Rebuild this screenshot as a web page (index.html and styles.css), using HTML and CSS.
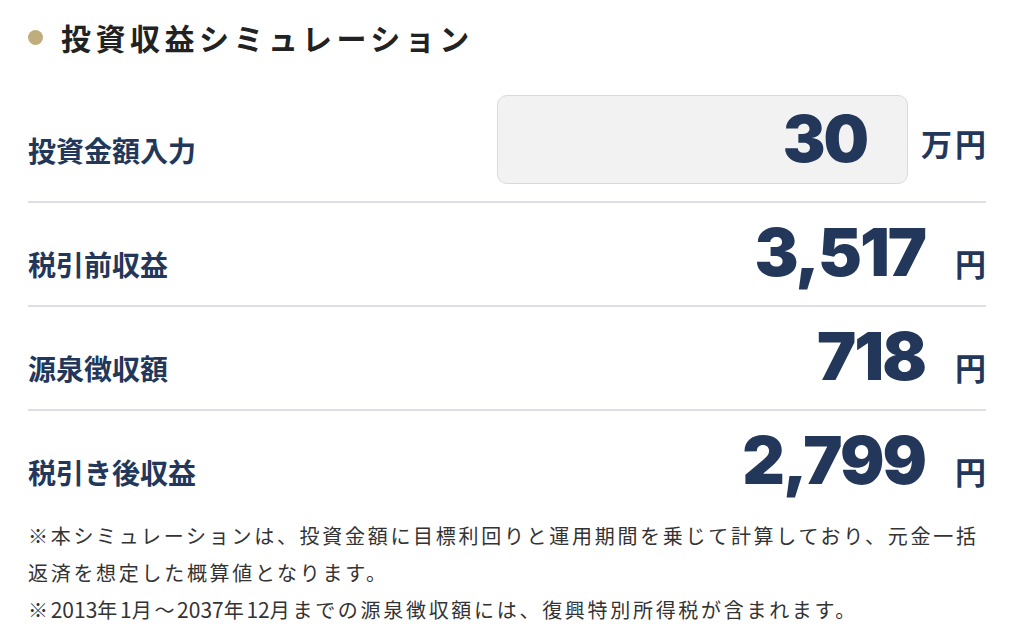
FILE: index.html
```html
<!DOCTYPE html>
<html lang="ja">
<head>
<meta charset="utf-8">
<title>投資収益シミュレーション</title>
<link rel="stylesheet" href="styles.css">
</head>
<body>
<section class="sim">
  <h2 class="sim-title"><span class="dot"></span>投資収益シミュレーション</h2>
  <div class="row row-input">
    <div class="label label-input">投資金額入力</div>
    <div class="input-wrap">
      <div class="input-box">30</div>
      <div class="unit unit-man">万円</div>
    </div>
  </div>
  <div class="row">
    <div class="label">税引前収益</div>
    <div class="value"><span class="num">3,517</span><span class="unit">円</span></div>
  </div>
  <div class="row">
    <div class="label">源泉徴収額</div>
    <div class="value"><span class="num">718</span><span class="unit">円</span></div>
  </div>
  <div class="row row-last">
    <div class="label">税引き後収益</div>
    <div class="value"><span class="num">2,799</span><span class="unit">円</span></div>
  </div>
  <div class="notes">
    <p>※本シミュレーションは、投資金額に目標利回りと運用期間を乗じて計算しており、元金一括返済を想定した概算値となります。</p>
    <p>※<span class="d">2013</span>年<span class="d">1</span>月〜<span class="d">2037</span>年<span class="d">12</span>月までの源泉徴収額には、復興特別所得税が含まれます。</p>
  </div>
</section>
</body>
</html>
```
FILE: styles.css
```css
html, body {
  margin: 0;
  padding: 0;
  background: #ffffff;
}
body {
  font-family: "Noto Sans CJK JP", "Noto Sans", sans-serif;
}
.sim {
  width: 958px;
  padding: 0 38px 0 28px;
}
.sim-title {
  display: flex;
  align-items: center;
  margin: 17px 0 0 0;
  height: 40px;
  font-size: 30px;
  line-height: 40px;
  font-weight: 700;
  letter-spacing: 4.5px;
  color: #222222;
}
.dot {
  width: 15px;
  height: 15px;
  border-radius: 50%;
  background: #bfae7c;
  margin: 0 18px 0 0;
  flex: none;
}
.row {
  display: flex;
  justify-content: space-between;
  align-items: baseline;
  padding: 16px 0 20px;
  border-bottom: 2px solid #dedee6;
}
.row-input {
  align-items: flex-start;
  padding: 38px 0 17px;
}
.row-last {
  border-bottom: none;
}
.label {
  font-size: 28px;
  line-height: 28px;
  font-weight: 700;
  color: #23375a;
}
.label-input {
  margin-top: 41px;
}
.input-wrap {
  display: flex;
  align-items: flex-start;
}
.input-box {
  box-sizing: border-box;
  width: 411px;
  height: 89px;
  border: 1.5px solid #d9d9de;
  border-radius: 10px;
  background: #f2f2f2;
  text-align: right;
  padding-right: 40px;
  font-family: Inter, "Liberation Sans", sans-serif;
  font-weight: 900;
  font-size: 64px;
  line-height: 86px;
  letter-spacing: -2px;
  color: #23375a;
}
.unit {
  font-size: 31px;
  line-height: 31px;
  font-weight: 700;
  color: #23375a;
}
.unit-man {
  margin: 32px -3px 0 13px;
  letter-spacing: 3px;
}
.value {
  display: flex;
  align-items: baseline;
}
.num {
  font-family: Inter, "Liberation Sans", sans-serif;
  font-weight: 900;
  font-size: 66px;
  line-height: 66px;
  letter-spacing: -2px;
  color: #23375a;
}
.value .unit {
  margin-left: 30px;
}
.notes {
  margin-top: 4px;
  font-size: 20px;
  line-height: 37px;
  letter-spacing: 2.7px;
  color: #333333;
}
.notes p {
  margin: 0;
}
.d {
  font-family: "Liberation Sans Narrow", "Noto Sans CJK JP", sans-serif;
  font-size: 21px;
  letter-spacing: 0;
}
```
